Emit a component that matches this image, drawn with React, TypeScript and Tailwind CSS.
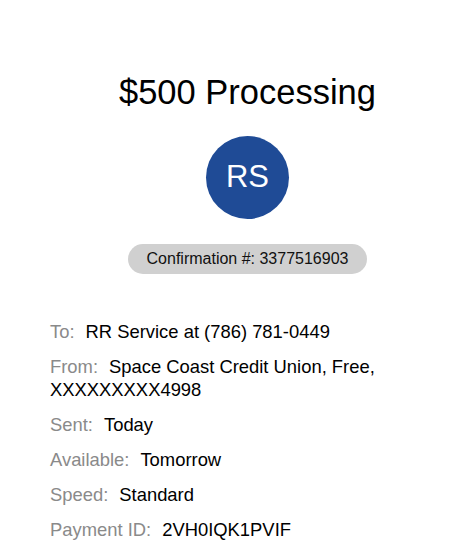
import React from "react";

const rows: { label: string; value: string }[] = [
  { label: "To:", value: "RR Service at (786) 781-0449" },
  { label: "From:", value: "Space Coast Credit Union, Free, XXXXXXXXX4998" },
  { label: "Sent:", value: "Today" },
  { label: "Available:", value: "Tomorrow" },
  { label: "Speed:", value: "Standard" },
  { label: "Payment ID:", value: "2VH0IQK1PVIF" },
];

export default function App() {
  return (
    <div
      className="w-[450px] h-[546px] bg-white overflow-hidden flex flex-col"
      style={{ fontFamily: '"Liberation Sans", Arial, sans-serif' }}
    >
      <div className="pl-[45px] flex flex-col items-center">
        <div className="mt-[72px] text-[34.5px] leading-[40px] text-black">$500 Processing</div>
        <div className="mt-[24px] w-[83px] h-[83px] rounded-full bg-[#1f4b96] flex items-center justify-center text-white text-[31px]">
          RS
        </div>
        <div className="mt-[25px] w-[239px] h-[30px] rounded-full bg-[#d0d0d0] flex items-center justify-center text-[16px] text-[#111]">
          Confirmation #: 3377516903
        </div>
      </div>
      <div className="mt-[46px] px-[50px] flex flex-col gap-[12px]">
        {rows.map((r) => (
          <div key={r.label} className="text-[18.4px] leading-[23px]">
            <span className="text-[#8a8a8a] mr-[11px]">{r.label}</span>
            <span className="text-black">{r.value}</span>
          </div>
        ))}
      </div>
    </div>
  );
}
